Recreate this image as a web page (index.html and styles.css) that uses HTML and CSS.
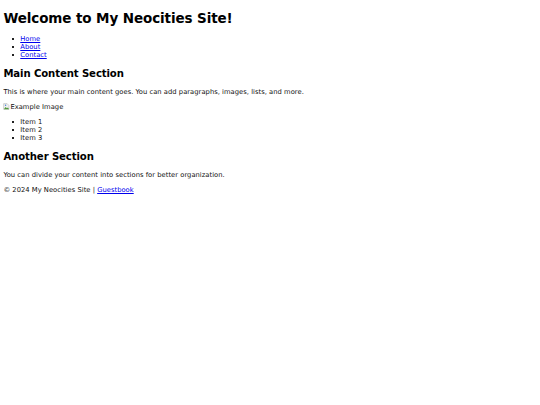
FILE: index.html
```html
<!DOCTYPE html>
<html lang="en">
<head>
<meta charset="utf-8">
<title>My Neocities Site</title>
<link rel="stylesheet" href="styles.css">
</head>
<body>
<header>
<h1 class="title">Welcome to My Neocities Site!</h1>
<nav>
<ul class="list">
<li class="item"><a href="#">Home</a></li>
<li class="item"><a href="#">About</a></li>
<li class="item"><a href="#">Contact</a></li>
</ul>
</nav>
</header>
<main>
<section>
<h2 class="heading">Main Content Section</h2>
<p class="para">This is where your main content goes. You can add paragraphs, images, lists, and more.</p>
<span class="broken"><svg class="broken-icon" viewBox="0 0 16 16" width="7" height="7"><path d="M1.5 1.5h8l4 4v9h-12z" fill="#f2f2f2" stroke="#9a9a9a" stroke-width="1"/><path d="M2 14l4-5 3 3 2-2 3 4z" fill="#4f9a3a"/><circle cx="6" cy="5" r="1.6" fill="#3f7fd6"/></svg>Example Image</span>
<ul class="list list-items">
<li class="item">Item 1</li>
<li class="item">Item 2</li>
<li class="item">Item 3</li>
</ul>
</section>
<section>
<h2 class="heading heading-next">Another Section</h2>
<p class="para">You can divide your content into sections for better organization.</p>
</section>
</main>
<footer>
<p class="para">&copy; 2024 My Neocities Site | <a href="#">Guestbook</a></p>
</footer>
</body>
</html>
```
FILE: styles.css
```css
body {
  margin: 3.375px;
  font-family: "DejaVu Sans", sans-serif;
  font-size: 6.75px;
  letter-spacing: 0.03px;
  color: #111;
  background: #fff;
}
.title {
  font-size: 2em;
  margin: 7px 0 9px;
  letter-spacing: -0.1px;
  color: #000;
}
.heading {
  font-size: 1.5em;
  margin: 8.4px 0 9.4px;
  letter-spacing: -0.1px;
  color: #000;
}
.heading-next {
  margin-top: 8.4px;
}
.para {
  margin: 6.75px 0;
}
.list {
  margin: 6.75px 0;
  padding-left: 16.875px;
  list-style: none;
}
.list-items {
  margin-top: 5.75px;
}
.item::before {
  content: "";
  display: inline-block;
  width: 2px;
  height: 2px;
  background: #222;
  margin-left: -8px;
  margin-right: 6px;
  vertical-align: 1.5px;
}
a {
  color: #0000ee;
}
.broken {
  display: inline-flex;
  align-items: center;
}
.broken-icon {
  display: block;
}
```
